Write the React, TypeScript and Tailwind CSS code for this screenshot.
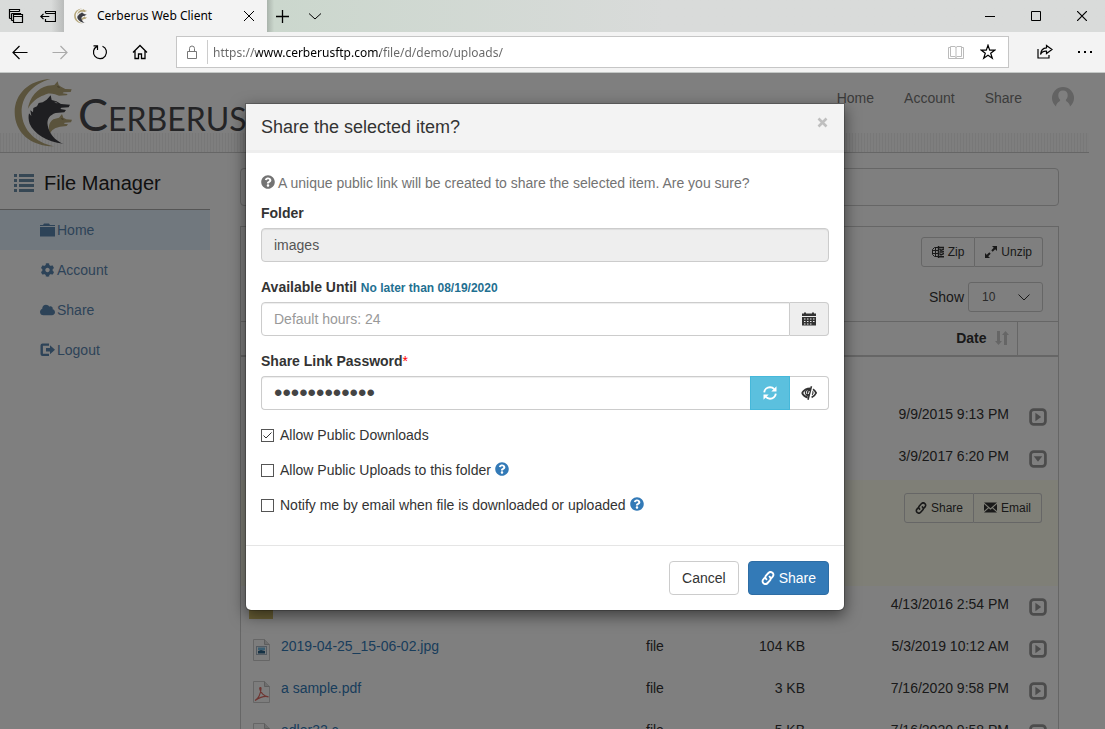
import React, { useState } from "react";
import { FaCloud, FaCog, FaQuestionCircle } from "react-icons/fa";

/* ---------- icons ---------- */

type IconProps = { className?: string };

function Line({ className, d, box = "0 0 16 16", width = 1 }: IconProps & { d: string; box?: string; width?: number }) {
  return (
    <svg viewBox={box} className={className} fill="none" stroke="currentColor" strokeWidth={width} aria-hidden="true">
      <path d={d} />
    </svg>
  );
}

function CerberusMark({ className }: IconProps) {
  return (
    <svg viewBox="42 18 174 210" className={className} aria-hidden="true">
      <g fill="#b5a679">
        <path d="M152 21C85 24 44 68 44 120c0 62 48 103 118 103C108 213 67 176 65 121c-1-45 30-84 87-100z" />
        <path d="M83 113c6-38 28-64 60-72l20-2 10-11 3 11 7 5 13 7 19 1-3 8-21 1-3 3 15 2-3 4-23 1-12-4c-14-4-24-3-33 3-18 5-38 21-49 42z" />
        <path d="M150 186c-6-20-4-34 10-44l17-5 9-11 4 11 9 5 17 1-3 8-19 1-2 3 12 2-4 5-20 2c-14 3-26 9-30 22z" />
      </g>
      <path
        fill="#3c3c42"
        d="M190 215c-50-6-88-30-101-60-4-12-4-22-2-31l7 8-3-17 8 6 1-13 11-5 5-10 12-2 12-8 12-13 3 14 14 4 14 8 27 2-4 8-22 1-3 4 17 3-5 7-26 2c-18 6-27 18-24 37 4 24 20 46 50 57z"
      />
      <path d="M164 90l8 3" stroke="#ccc" strokeWidth="2.500" />
      <path d="M172 44l7 2M184 140l6 2" stroke="#6e6140" strokeWidth="2.500" />
    </svg>
  );
}

function LinkIcon({ className }: IconProps) {
  return (
    <svg viewBox="0 0 14 14" className={className} fill="none" stroke="currentColor" strokeWidth="1.9" strokeLinecap="round" aria-hidden="true">
      <path d="M5.400 8.300C4.100 7.300 4 5.700 5 4.600L7.400 2C8.500.8 10.300.8 11.500 1.800c1.200 1.100 1.300 2.700.2 3.900L10.600 7" />
      <path d="M8.600 5.700C9.900 6.700 10 8.300 9 9.400L6.600 12c-1.100 1.200-2.900 1.200-4.100.2C1.300 11.100 1.200 9.500 2.300 8.300L3.400 7" />
    </svg>
  );
}

function EnvelopeIcon({ className }: IconProps) {
  return (
    <svg viewBox="0 0 13 11" className={className} fill="currentColor" aria-hidden="true">
      <path d="M0 .5h13L6.500 6.300zM0 2l4 3.600L0 9zM13 2L9 5.600 13 9zM4.800 6.300l1.700 1.500 1.700-1.500L13 10.500H0z" />
    </svg>
  );
}

function ListIcon({ className }: IconProps) {
  return (
    <svg viewBox="0 0 20 18" className={className} fill="currentColor" aria-hidden="true">
      <path d="M0 0h3v3H0zM5 0h15v3H5zM0 5h3v3H0zM5 5h15v3H5zM0 10h3v3H0zM5 10h15v3H5zM0 15h3v3H0zM5 15h15v3H5z" />
    </svg>
  );
}

function FolderIcon({ className }: IconProps) {
  return (
    <svg viewBox="0 0 15 14" className={className} fill="currentColor" aria-hidden="true">
      <path d="M0 3V2h3l1-1.500h5L10 2h5v1zM0 4h15v9.500H0z" />
    </svg>
  );
}

function LogoutIcon({ className }: IconProps) {
  return (
    <svg viewBox="0 0 15 14" className={className} fill="currentColor" aria-hidden="true">
      <path d="M9 .5H2.500A2 2 0 0 0 .5 2.500v8.500a2 2 0 0 0 2 2H9v-2.300H2.900V2.800H9z" />
      <path d="M6 5h4V2.300l5 4.450-5 4.450V8.500H6z" />
    </svg>
  );
}

function CalendarIcon({ className }: IconProps) {
  return (
    <svg viewBox="0 0 14 14" className={className} fill="currentColor" aria-hidden="true">
      <path d="M0 1.500h2V.5h2v1h6v-1h2v1h2V4H0z" />
      <path
        fillRule="evenodd"
        d="M0 5h14v8.500H0zM2 6.500v1h1.500v-1zm3 0v1h1.500v-1zm3 0v1h1.500v-1zm3 0v1h1.500v-1zM2 9v1h1.500V9zm3 0v1h1.500V9zm3 0v1h1.500V9zm3 0v1h1.500V9zM2 11.500v1h1.500v-1zm3 0v1h1.500v-1zm3 0v1h1.500v-1z"
      />
    </svg>
  );
}

function RefreshIcon({ className }: IconProps) {
  return (
    <svg viewBox="0 0 14 14" className={className} aria-hidden="true">
      <path d="M1.200 6.300C1.500 3.300 4 1.300 7 1.300c1.800 0 3.200.7 4.200 1.800M12.800 7.700c-.3 3-2.800 5-5.800 5-1.800 0-3.200-.7-4.200-1.800" fill="none" stroke="currentColor" strokeWidth="1.900" />
      <path d="M13.500.3v5.200H8.300zM.5 13.700V8.500h5.200z" fill="currentColor" />
    </svg>
  );
}

function EyeClosedIcon({ className }: IconProps) {
  return (
    <svg viewBox="0 0 16 14" className={className} aria-hidden="true">
      <path d="M10.500.3L7 13.700" stroke="currentColor" strokeWidth="1.500" fill="none" />
      <path d="M1 7C2.800 3.800 5.500 2.300 9.500 2.300M1 7c1.300 2.500 3.200 4 5.700 4.500M12 3.300c1.300.8 2.300 2 3.100 3.700-1 2.200-2.500 3.700-4.500 4.400" stroke="currentColor" strokeWidth="1.800" fill="none" />
      <path d="M4 5C5.500 2.500 8 2 10 2L7.700 10.500C4.700 10.300 3.200 7.500 4 5z" fill="currentColor" />
      <path d="M6.300 4.500c-1 .8-1.200 2.300-.3 3.500M8.300 5l-1 3" stroke="#fff" fill="none" strokeWidth=".9" />
      <path d="M11.700 5.300c.6 1.200.4 2.500-.5 3.500" stroke="currentColor" fill="none" strokeWidth="1.200" />
    </svg>
  );
}

function ZipIcon({ className }: IconProps) {
  return (
    <svg viewBox="0 0 12 12" className={className} fill="none" stroke="currentColor" aria-hidden="true">
      <path d="M6 1.500H2.500l-2 2v5l2 2H6M.5 4.500H6M.5 7.500H6M3.500 1.500v9" />
      <path d="M6.500 0v12" strokeWidth="1.400" />
      <path d="M7 1.500h5M7.500 3L9 4.500l3-1.500M7.500 6h2.500l2-.500M7.500 7.500L9 9l3-1.500M7 10.700h5" strokeWidth="1.400" />
    </svg>
  );
}

function ExpandIcon({ className }: IconProps) {
  return (
    <svg viewBox="0 0 12 12" className={className} aria-hidden="true">
      <path d="M7 5l3-3M5 7l-3 3" stroke="currentColor" strokeWidth="2" />
      <path d="M12 0v5L7 0zM0 12V7l5 5z" fill="currentColor" />
    </svg>
  );
}

function SortIcon({ className }: IconProps) {
  return (
    <svg viewBox="0 0 14 14" className={className} fill="currentColor" aria-hidden="true">
      <path d="M2 0h3v10h2l-3.500 4L0 10h2zM9 14h3V4h2l-3.500-4L7 4h2z" />
    </svg>
  );
}

function ToggleIcon({ className, open }: IconProps & { open?: boolean }) {
  return (
    <svg viewBox="0 0 17 17" className={className} aria-hidden="true">
      <rect x="1.500" y="1.500" width="14" height="14" rx="3" fill="none" stroke="currentColor" strokeWidth="2.600" />
      <path d={open ? "M4.500 6h8l-4 5z" : "M6 4.500l5.500 4-5.500 4z"} fill="currentColor" />
    </svg>
  );
}

function FileIcon({ className, kind }: IconProps & { kind: string }) {
  return (
    <svg viewBox="0 0 17 22" className={className} aria-hidden="true">
      <path d="M.5.5h11l5 5v16H.5z" fill="#fbfbfb" stroke="#ccc" />
      <path d="M11.500.5v5h5" fill="#ddd" stroke="#bbb" />
      {kind === "image" && (
        <g>
          <rect x="3.500" y="7.500" width="10" height="8" fill="#f1f6fa" stroke="#a9b7c4" />
          <path d="M5 8.500h7v2.500H5z" fill="#74bde4" />
          <path d="M5 12l3-1 4 1v2.500H5z" fill="#2b6288" />
        </g>
      )}
      {kind === "pdf" && (
        <path d="M2 19.500C5 18 8 13 8 7.500c0-1.500-1.500-1.300-1.200.3.700 4 4.200 7.700 8.700 8-3.500-1-8.500.5-13.500 3.700z" fill="none" stroke="#dd6a62" strokeWidth="1.200" />
      )}
      {kind === "text" && <path d="M4 11h8M4 14h8M4 17h8" stroke="#aaa" />}
    </svg>
  );
}

function Avatar({ className }: IconProps) {
  return (
    <svg viewBox="0 0 22 22" className={className} aria-hidden="true">
      <circle cx="11" cy="11" r="11" fill="#c6c6c6" />
      <path d="M11 3.500c-3 0-4.700 2-4.700 4.700 0 2 .8 3.700 2 4.800-.2 1.700-3.800 2.500-4.300 6.300l1 2.700h12l1-2.700c-.5-3.800-4.100-4.600-4.300-6.300 1.200-1.100 2-2.800 2-4.800 0-2.700-1.700-4.700-4.700-4.700z" fill="#fff" />
    </svg>
  );
}

/* ---------- browser chrome ---------- */

function BrowserChrome() {
  return (
    <header className="flex h-[73px] shrink-0 flex-col border-b border-[#c4c8c6] bg-[#f3f3f3] font-['Noto_Sans',sans-serif] text-xs text-black">
      <div className="flex h-8 items-stretch bg-linear-to-r from-[#cbd7cd] from-25% to-[#d9dbda] to-60%">
        <div className="flex w-16 items-center gap-4 bg-linear-to-r from-[#d9dbda] from-80% to-[#b9bbba] pl-2">
          <button type="button" aria-label="Show tabs" className="size-4">
            <Line className="size-4" d="M1.500 10.500v-9h10v2M1.500 3.500h10M3.500 12.500v-7M3.500 5.500h9v1M5.500 6.500h9v8h-9zM5.500 8.500h9M3.500 12.500h2M1.500 10.500h2" width={1.2} />
          </button>
          <button type="button" aria-label="Set tabs aside" className="size-4">
            <Line className="size-4" d="M5.500 5V3.500h10v10h-10V11M5.500 5.500h10M.8 8.500h8.500M3.500 5.800L.8 8.500l2.700 2.700" width={1.2} />
          </button>
        </div>
        <div className="flex w-[203px] items-center bg-[#f3f3f3] pr-3 pl-[10px]">
          <CerberusMark className="h-4 w-[13px] shrink-0" />
          <span className="ml-[10px] flex-1 whitespace-nowrap">Cerberus Web Client</span>
          <button type="button" aria-label="Close tab" className="size-3">
            <Line className="size-3" box="0 0 12 12" d="M1 1l10 10M11 1L1 11" />
          </button>
        </div>
        <div className="flex flex-1 items-center gap-5 bg-linear-to-r from-[#a9b3ab] to-transparent to-1% pl-[9px]">
          <button type="button" aria-label="New tab" className="size-[13px]">
            <Line className="size-[13px]" box="0 0 13 13" d="M6.500 0v13M0 6.500h13" width={1.3} />
          </button>
          <button type="button" aria-label="Tab previews" className="h-3 w-3">
            <Line className="h-3 w-3" box="0 0 12 12" d="M0 3.500l6 5.500 6-5.500" />
          </button>
        </div>
        <div className="flex items-center gap-9 pr-[18px]">
          <button type="button" aria-label="Minimize" className="size-[10px]">
            <Line className="size-[10px]" box="0 0 10 10" d="M0 5.500h10" />
          </button>
          <button type="button" aria-label="Maximize" className="size-[10px]">
            <Line className="size-[10px]" box="0 0 10 10" d="M.5.5h9v9h-9z" />
          </button>
          <button type="button" aria-label="Close" className="size-[10px]">
            <Line className="size-[10px]" box="0 0 10 10" d="M0 0l10 10M10 0L0 10" width={1.2} />
          </button>
        </div>
      </div>
      <div className="flex flex-1 items-center">
        <div className="flex w-44 items-center gap-6 pl-3">
          <button type="button" aria-label="Back" className="size-4">
            <Line className="size-4" d="M15.500 8.500H1M7.500 2L1 8.500 7.500 15" width={1.2} />
          </button>
          <button type="button" aria-label="Forward" className="size-4 text-[#aaa]">
            <Line className="size-4" d="M.5 8.500H15M8.500 2L15 8.500 8.500 15" width={1.2} />
          </button>
          <button type="button" aria-label="Refresh" className="size-4">
            <Line className="size-4" d="M10.500 2.200a6.500 6.500 0 1 1-5.500.2M1.500 1.800h4V6" width={1.2} />
          </button>
          <button type="button" aria-label="Home page" className="size-4">
            <Line className="size-4" d="M1 8.500L8 1.500l7 7M3 7v7.500h3.500V10h3v4.500H13V7" width={1.3} />
          </button>
        </div>
        <form className="flex h-8 flex-1 items-center border border-[#c6c6c6] bg-white" onSubmit={(e) => e.preventDefault()}>
          <Line className="mx-2 size-[14px] text-[#777]" box="0 0 14 14" d="M2.500 6.500h9v7h-9zM4.500 6.500v-3a2.500 2.500 0 0 1 5 0v3" />
          <span className="mr-[5px] h-6 w-px bg-[#ccc]" />
          <input
            type="text"
            aria-label="Address"
            defaultValue="https://www.cerberusftp.com/file/d/demo/uploads/"
            className="h-6 min-w-0 flex-1 bg-[linear-gradient(90deg,#666_43px,#000_43px,#000_167px,#666_167px)] bg-clip-text text-transparent"
          />
          <button type="button" aria-label="Reading view" className="mr-4 h-4 w-4 text-[#bbb]">
            <Line className="size-4" d="M8 2.500v12M2.500 2.500H7l1 1 1-1h4.500v10H9l-1 1-1-1H2.500zM2.500 3.500H.5v11h15v-11h-2" />
          </button>
          <button type="button" aria-label="Add to favorites" className="mr-3 size-4">
            <Line className="size-4" d="M8 1.200l1.700 4.900h5.200l-4.200 3.100 1.600 5L8 11.200l-4.300 3 1.600-5L1.100 6.100h5.200z" width={1.200} />
          </button>
        </form>
        <div className="flex w-24 items-center gap-6 pl-7">
          <button type="button" aria-label="Share this page" className="size-4">
            <Line className="size-4" d="M1 5v9h11v-3M9.500 1.500l5.500 4-5.500 4V7.200C6.500 7 4.500 8 3.500 10.500c.3-4 2.700-6.500 6-6.700z" width={1.2} />
          </button>
          <button type="button" aria-label="More" className="size-4">
            <svg viewBox="0 0 16 16" className="size-4" fill="currentColor" aria-hidden="true">
              <path d="M1 7h2v2H1zM7 7h2v2H7zM13 7h2v2h-2z" />
            </svg>
          </button>
        </div>
      </div>
    </header>
  );
}

/* ---------- file manager page ---------- */

const menu = [
  { label: "Home", icon: FolderIcon, active: true },
  { label: "Account", icon: FaCog },
  { label: "Share", icon: FaCloud },
  { label: "Logout", icon: LogoutIcon },
];

const files = [
  { name: "documents", kind: "folder", type: "folder", size: "", date: "9/9/2015 9:13 PM" },
  { name: "images", kind: "folder", type: "folder", size: "", date: "3/9/2017 6:20 PM", open: true },
  { name: "videos", kind: "folder", type: "folder", size: "", date: "4/13/2016 2:54 PM" },
  { name: "2019-04-25_15-06-02.jpg", kind: "image", type: "file", size: "104 KB", date: "5/3/2019 10:12 AM" },
  { name: "a sample.pdf", kind: "pdf", type: "file", size: "3 KB", date: "7/16/2020 9:58 PM" },
  { name: "adler32.c", kind: "text", type: "file", size: "5 KB", date: "7/16/2020 9:58 PM" },
];

const smallButton = "flex h-[30px] items-center gap-1 border border-[#ccc] px-[10px] text-xs text-[#333]";

function FileRow({ file }: { file: (typeof files)[number] }) {
  return (
    <>
      <tr className="h-[42px] align-top">
        <td className="p-2">
          <div className="flex items-start gap-[11px] pl-1">
            {file.kind === "folder" ? (
              <span className="-mx-1 mt-1 h-[21px] w-6 shrink-0 bg-[#d3be6a]" />
            ) : (
              <FileIcon kind={file.kind} className="mt-[3px] h-[22px] w-[17px] shrink-0" />
            )}
            <a href="#" className="text-[#337ab7]">
              {file.name}
            </a>
          </div>
        </td>
        <td className="p-2">{file.type}</td>
        <td className="p-2 text-right">{file.size}</td>
        <td className="p-2 text-right whitespace-nowrap">{file.date}</td>
        <td className="py-3 pl-3">
          <button type="button" aria-label={`Actions for ${file.name}`} className="block text-[#999]">
            <ToggleIcon className="size-[18px]" open={file.open} />
          </button>
        </td>
      </tr>
      {file.open && (
        <tr className="h-[106px] bg-[#ffffef] align-top">
          <td colSpan={5} className="pt-[13px] pr-4">
            <div className="flex justify-end">
              <button type="button" className={`${smallButton} rounded-l-[3px]`}>
                <LinkIcon className="size-3" />
                Share
              </button>
              <button type="button" className={`${smallButton} rounded-r-[3px] border-l-0`}>
                <EnvelopeIcon className="h-[11px] w-[13px]" />
                Email
              </button>
            </div>
          </td>
        </tr>
      )}
    </>
  );
}

function FileManager() {
  return (
    <div className="flex flex-1 flex-col pr-4">
      <div className="flex h-20 shrink-0 border-b border-[#ccc] bg-[repeating-linear-gradient(90deg,#f1f1f1_0px,#f1f1f1_1px,#fcfcfc_1px,#fcfcfc_3px)] bg-[length:100%_19px] bg-bottom bg-no-repeat">
        <div className="flex flex-1 items-start pt-[5px] pl-[14px]">
          <CerberusMark className="h-[70px] w-[58px] shrink-0" />
          <div className="pt-2 pl-[6px] font-['Lato',sans-serif] text-[45px] leading-[56px] whitespace-nowrap text-[#48484c]">
            C<span className="text-[32px]">ERBERUS</span>
          </div>
        </div>
        <nav className="flex h-[50px] items-center gap-[30px] pr-[15px] text-[#777]">
          <a href="#">Home</a>
          <a href="#">Account</a>
          <a href="#">Share</a>
          <Avatar className="size-[22px]" />
        </nav>
      </div>

      <div className="flex flex-1">
        <aside className="w-[210px] shrink-0">
          <div className="flex h-[57px] items-center gap-[10px] border-b border-[#aaa] pt-1 pl-[14px] text-xl text-[#222]">
            <ListIcon className="h-[18px] w-5 text-[#6c8fa8]" />
            File Manager
          </div>
          <ul>
            {menu.map(({ label, icon: Icon, active }) => (
              <li key={label} className={active ? "bg-[#e3f1fc]" : ""}>
                <a href="#" className="flex h-10 items-center gap-[2px] pl-10 text-[#5b86b0]">
                  <Icon className="h-[14px] w-[15px]" />
                  {label}
                </a>
              </li>
            ))}
          </ul>
        </aside>

        <main className="min-w-0 flex-1 px-[30px] pt-[15px]">
          <div className="h-[38px] rounded border border-[#ccc]" />
          <section className="mt-5 border border-[#ccc]">
            <div className="flex flex-col items-end gap-[15px] pt-[10px] pr-[15px] pb-[9px]">
              <div className="flex">
                <button type="button" className={`${smallButton} rounded-l-[3px]`}>
                  <ZipIcon className="size-3" />
                  Zip
                </button>
                <button type="button" className={`${smallButton} rounded-r-[3px] border-l-0`}>
                  <ExpandIcon className="size-3" />
                  Unzip
                </button>
              </div>
              <label className="flex items-center gap-1">
                Show
                <span className="grid">
                  <select className="col-start-1 row-start-1 h-[30px] w-[75px] appearance-none rounded-[3px] border border-[#ccc] px-[13px] text-xs text-[#555]" defaultValue="10">
                    <option>10</option>
                    <option>25</option>
                    <option>50</option>
                  </select>
                  <Line className="pointer-events-none col-start-1 row-start-1 mr-[13px] size-3 self-center justify-self-end" box="0 0 12 12" d="M.5 3.500L6 9l5.500-5.500" />
                </span>
              </label>
            </div>
            <table className="w-full table-fixed border-t border-[#ccc]">
              <colgroup>
                <col />
                <col className="w-[100px]" />
                <col className="w-[75px]" />
                <col className="w-[204px]" />
                <col className="w-[41px]" />
              </colgroup>
              <thead>
                <tr className="h-[34px] border-b-2 border-[#ccc]">
                  <th className="px-2 text-left">Name</th>
                  <th className="px-2 text-left">Type</th>
                  <th className="px-2 text-right">Size</th>
                  <th className="border-r border-[#ccc] px-2">
                    <span className="flex items-center justify-end gap-2">
                      Date
                      <SortIcon className="size-[14px] text-[#ccc]" />
                    </span>
                  </th>
                  <th aria-label="Actions" />
                </tr>
              </thead>
              <tbody>
                <tr className="h-10">
                  <td colSpan={5} className="px-2">
                    <a href="#" className="text-[#337ab7]">..</a>
                  </td>
                </tr>
                {files.map((file) => (
                  <FileRow key={file.name} file={file} />
                ))}
              </tbody>
            </table>
          </section>
        </main>
      </div>
    </div>
  );
}

/* ---------- share dialog ---------- */

function Check({ id, label, initial = false, help = false }: { id: string; label: string; initial?: boolean; help?: boolean }) {
  const [on, setOn] = useState(initial);
  return (
    <div className="flex h-5 items-center">
      <span className="grid place-items-center">
        <input
          id={id}
          type="checkbox"
          checked={on}
          onChange={(e) => setOn(e.target.checked)}
          className="col-start-1 row-start-1 size-[13px] appearance-none border border-[#555] bg-white"
        />
        {on && <Line className="pointer-events-none col-start-1 row-start-1 size-[13px] text-[#333]" box="0 0 13 13" d="M2.500 6.500L5 9l5.500-5.500" />}
      </span>
      <label htmlFor={id} className="ml-[6px]">
        {label}
      </label>
      {help && <FaQuestionCircle className="mb-[2px] ml-1 size-[14px] text-[#337ab7]" />}
    </div>
  );
}

const field = "h-[34px] min-w-0 flex-1 border border-[#ccc] px-3 text-sm text-[#555] inset-shadow-[0_1px_1px_rgba(0,0,0,0.075)] placeholder:text-[#999]";

function ShareDialog() {
  const [password, setPassword] = useState("k3Rb9xT2mQ7z");
  return (
    <div className="absolute inset-0 overflow-hidden bg-black/50 pt-[30px] pr-[15px]">
      <form
        role="dialog"
        aria-labelledby="share-title"
        onSubmit={(e) => e.preventDefault()}
        className="mx-auto w-[600px] max-w-full rounded-b-md border border-black/20 bg-white bg-clip-padding shadow-[0_5px_15px_rgba(0,0,0,0.5)]"
      >
        <div className="flex h-[49px] items-start justify-between border-b-3 border-[#eee] bg-[#f3f3f3] px-[15px] pt-[10px]">
          <h1 id="share-title" className="text-lg leading-[26px]">
            Share the selected item?
          </h1>
          <button type="button" aria-label="Close dialog" className="mt-[3px] mr-px text-[#bfbfbf]">
            <Line className="size-[11px]" box="0 0 11 11" d="M1.500 1.500l8 8M9.500 1.500l-8 8" width={2.6} />
          </button>
        </div>

        <div className="px-[15px] pt-5 pb-[30px]">
          <p className="flex items-center gap-[3px] text-[#737373]">
            <FaQuestionCircle className="mb-[2px] size-[14px]" />A unique public link will be created to share the selected item. Are you sure?
          </p>

          <label htmlFor="folder" className="mt-[10px] mb-[5px] block font-bold">
            Folder
          </label>
          <div className="flex">
            <input id="folder" readOnly value="images" className={`${field} rounded bg-[#eee]`} />
          </div>

          <label htmlFor="until" className="mt-[15px] mb-[5px] block font-bold">
            Available Until <span className="text-xs text-[#1f7091]">No later than 08/19/2020</span>
          </label>
          <div className="flex">
            <input id="until" placeholder="Default hours: 24" className={`${field} rounded-l`} />
            <button type="button" aria-label="Pick a date" className="flex w-[39px] items-center justify-center rounded-r border border-l-0 border-[#ccc] bg-[#eee]">
              <CalendarIcon className="size-[14px]" />
            </button>
          </div>

          <label htmlFor="password" className="mt-[15px] mb-[5px] block font-bold">
            Share Link Password<span className="font-normal text-[#f00]">*</span>
          </label>
          <div className="flex">
            <input
              id="password"
              type="password"
              value={password}
              onChange={(e) => setPassword(e.target.value)}
              className="h-[34px] min-w-0 flex-1 rounded-l border border-r-0 border-[#ccc] px-3 text-2xl text-[#444] inset-shadow-[0_1px_1px_rgba(0,0,0,0.075)]"
            />
            <button type="button" aria-label="Generate password" className="flex w-10 items-center justify-center border border-[#46b8da] bg-[#5bc0de] text-white">
              <RefreshIcon className="size-[14px]" />
            </button>
            <button type="button" aria-label="Show password" className="flex w-[39px] items-center justify-center rounded-r border border-l-0 border-[#ccc]">
              <EyeClosedIcon className="h-[14px] w-4" />
            </button>
          </div>

          <div className="mt-[15px] flex flex-col gap-[15px]">
            <Check id="downloads" label="Allow Public Downloads" initial />
            <Check id="uploads" label="Allow Public Uploads to this folder" help />
            <Check id="notify" label="Notify me by email when file is downloaded or uploaded" help />
          </div>
        </div>

        <div className="flex justify-end gap-[9px] border-t border-[#e5e5e5] p-[15px]">
          <button type="button" className="h-[34px] rounded border border-[#ccc] px-3">
            Cancel
          </button>
          <button type="submit" className="flex h-[34px] items-center gap-1 rounded border border-[#2e6da4] bg-[#337ab7] px-3 text-white">
            <LinkIcon className="size-[14px]" />
            Share
          </button>
        </div>
      </form>
    </div>
  );
}

export default function App() {
  return (
    <div className="flex h-screen flex-col overflow-hidden bg-white font-['Liberation_Sans',Arial,sans-serif] text-sm text-[#333]">
      <BrowserChrome />
      <div className="relative flex min-h-0 flex-1 flex-col overflow-hidden">
        <FileManager />
        <ShareDialog />
      </div>
    </div>
  );
}
